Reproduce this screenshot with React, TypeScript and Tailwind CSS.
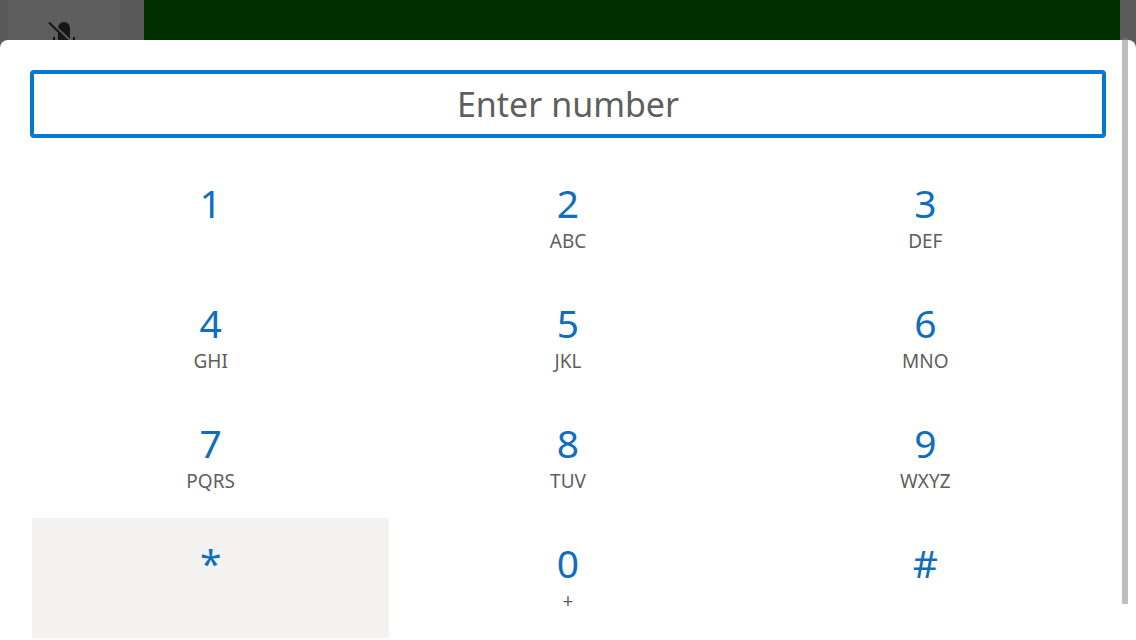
const keys = [
  { digit: '1', letters: '' },
  { digit: '2', letters: 'ABC' },
  { digit: '3', letters: 'DEF' },
  { digit: '4', letters: 'GHI' },
  { digit: '5', letters: 'JKL' },
  { digit: '6', letters: 'MNO' },
  { digit: '7', letters: 'PQRS' },
  { digit: '8', letters: 'TUV' },
  { digit: '9', letters: 'WXYZ' },
  { digit: '*', letters: '' },
  { digit: '0', letters: '+' },
  { digit: '#', letters: '' },
];

function MicOffIcon() {
  return (
    <svg viewBox="0 0 28 32" className="h-8 w-7" aria-hidden="true">
      <path d="M10 7a6 6 0 0 1 12 0v10a6 6 0 0 1-12 0z" fill="#161616" />
      <path d="M6 16v1a10 10 0 0 0 20 0v-1M16 27v4" fill="none" stroke="#161616" strokeWidth="2" />
      <path d="M8 6L27 24" stroke="#5d5d5d" strokeWidth="2" />
      <path d="M1.500 2L27 27" stroke="#161616" strokeWidth="2" strokeLinecap="round" />
    </svg>
  );
}

function CallScreen() {
  return (
    <div className="flex h-10 bg-[#5b5b5b]">
      <div className="flex w-36 shrink-0 bg-[#595959] pl-2">
        <button
          type="button"
          aria-label="Unmute"
          className="flex w-28 justify-center overflow-hidden bg-[#5d5d5d] pt-[21px] pr-1"
        >
          <MicOffIcon />
        </button>
      </div>
      <div className="mr-4 grow bg-[#003000]" />
    </div>
  );
}

function Dialpad() {
  return (
    <div className="grid grid-cols-3">
      {keys.map(({ digit, letters }) => (
        <button
          key={digit}
          type="button"
          className={`flex h-30 flex-col items-center pt-5 ${digit === '*' ? 'bg-[#f3f2f1]' : 'bg-white'}`}
        >
          <span className="text-[39px] leading-[50px] text-[#106ebe]">{digit}</span>
          <span className="text-[19px] leading-[26px] text-[#605e5c]">{letters}</span>
        </button>
      ))}
    </div>
  );
}

export default function App() {
  return (
    <main className="relative h-screen overflow-hidden bg-[#5b5b5b] font-['Segoe_UI','Noto_Sans','Open_Sans',sans-serif]">
      <CallScreen />
      <section role="dialog" aria-label="Dialpad" className="min-h-full rounded-t-lg bg-white px-8 pt-8">
        <input
          type="tel"
          aria-label="Enter number"
          placeholder="Enter number"
          className="mb-[22px] block h-16 w-full rounded-xs bg-white text-center text-[34px] text-[#323130] outline-4 -outline-offset-2 outline-[#0078d4] placeholder:text-[#605e5c]"
        />
        <Dialpad />
      </section>
      <div className="absolute top-[38px] right-2 bottom-9 w-1.5 bg-[#808080]/50" />
    </main>
  );
}
